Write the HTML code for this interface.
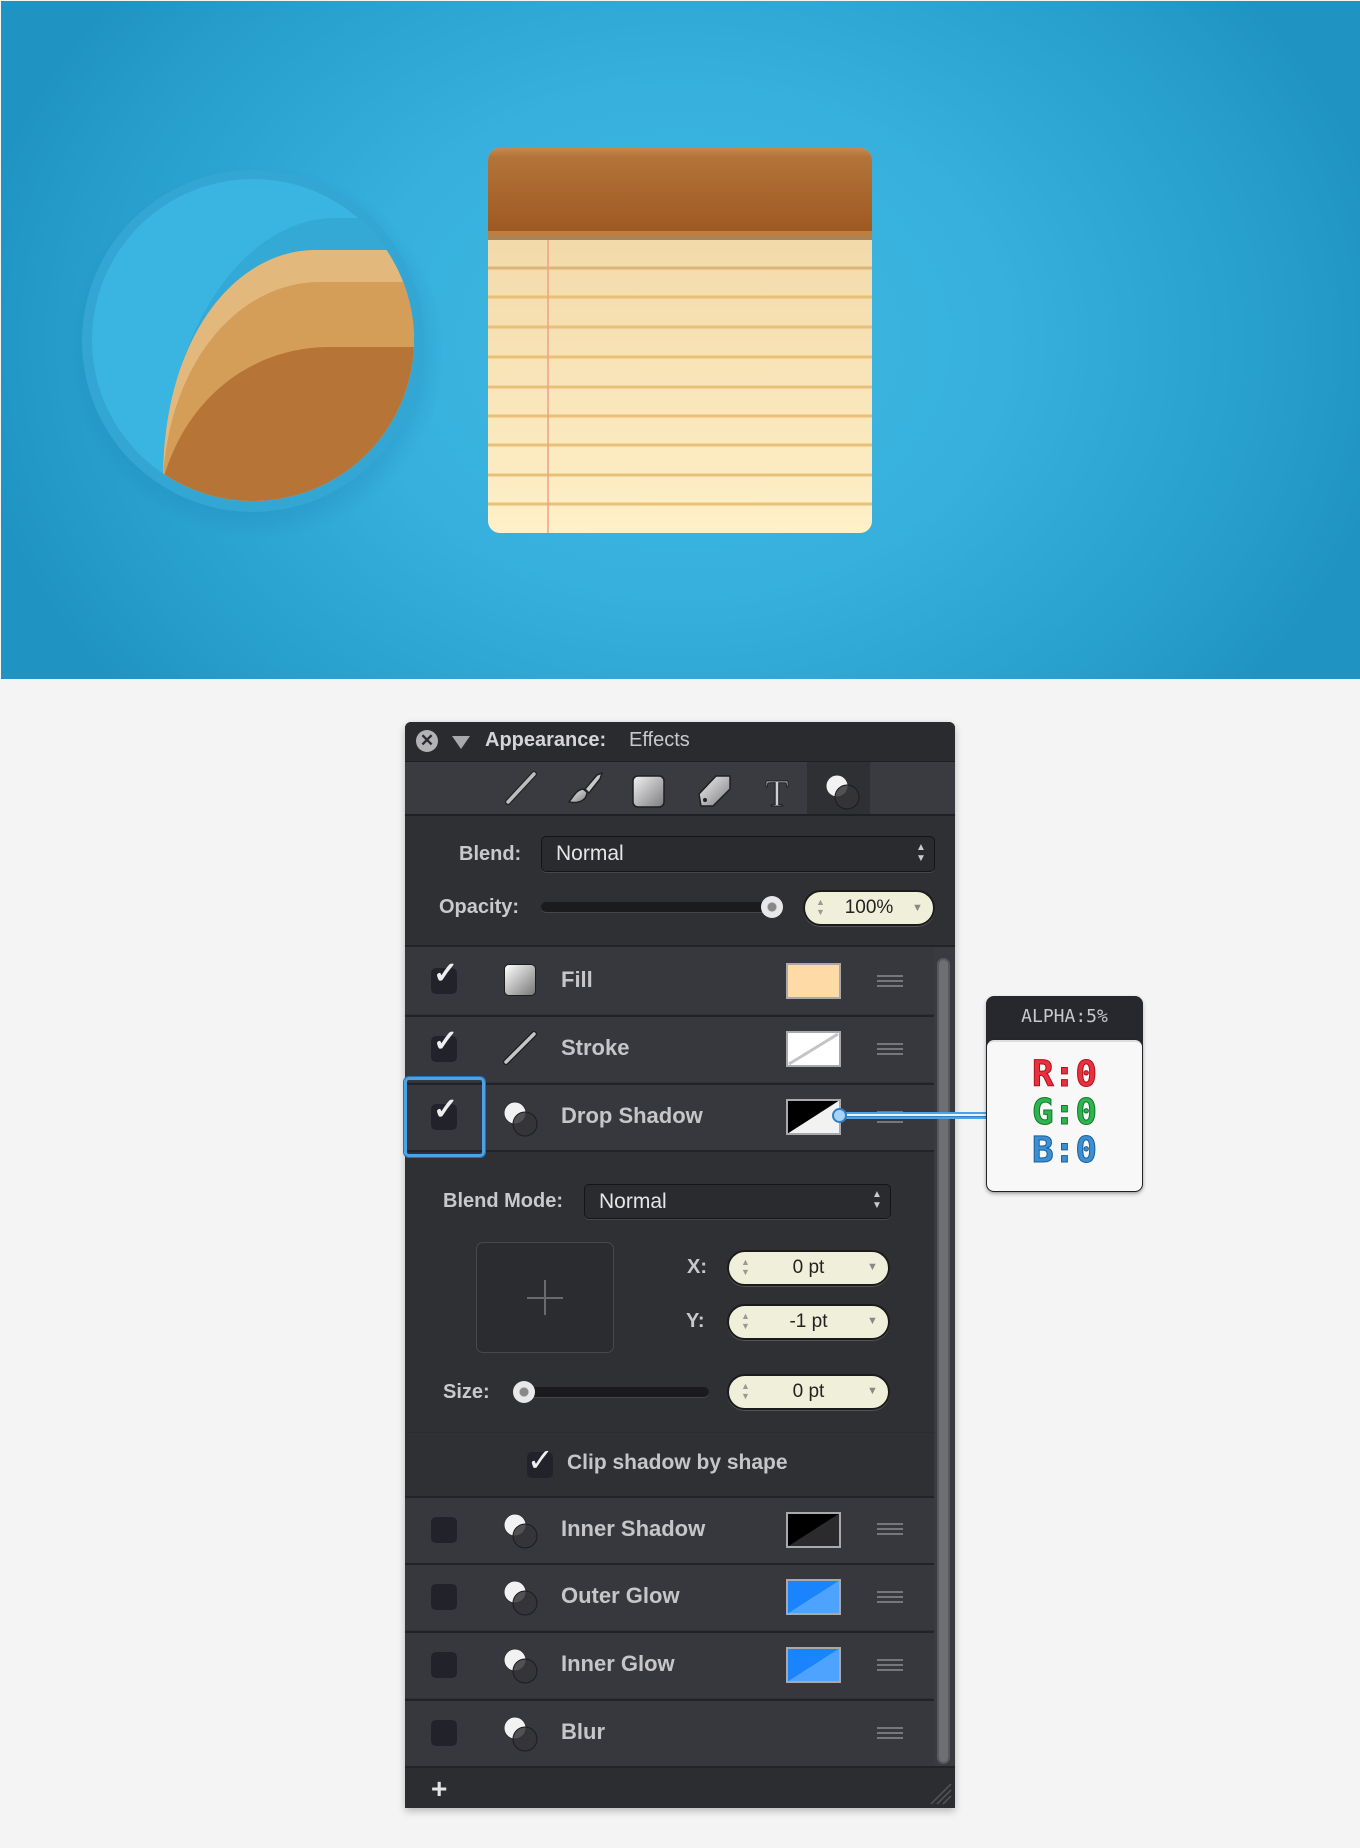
<!DOCTYPE html>
<html><head><meta charset="utf-8"><style>
*{margin:0;padding:0;box-sizing:border-box}
body{width:1360px;height:1848px;background:#f4f4f4;position:relative;overflow:hidden;font-family:"Liberation Sans",sans-serif}
.a{position:absolute}
.hero{left:1px;top:1px;width:1359px;height:678px;background:radial-gradient(ellipse 720px 560px at 680px 340px,#3eb8e2 0%,#37b0dd 45%,#2aa2cf 75%,#1f94c3 100%)}
.lbl{color:#c9c9cc;font-weight:bold;font-size:20px}
.row{left:405px;width:529px;height:67px;background:#37383d;border-top:2px solid #222326}
.cb{width:26px;height:26px;border-radius:5px;background:#22232a}
.name{color:#c6c6c9;font-weight:bold;font-size:22px}
.sw{width:55px;height:36px}
.ham{width:26px;height:12px;border-top:2px solid #77777b;border-bottom:2px solid #77777b}
.ham:after{content:"";position:absolute;left:0;top:3px;width:26px;height:2px;background:#77777b}
.field{height:36px;border-radius:18px;background:#f0f0da;border:2px solid #1b1b1b;box-shadow:0 1px 0 #555;color:#222;font-size:19px;text-align:center;line-height:32px}
.drop{border:1px solid #151517;border-radius:5px;background:#2a2b2f;color:#e6e6e6;font-size:21px;line-height:34px;padding-left:14px;box-shadow:0 1px 0 #46474b}
.ck{color:#eee;font-size:30px;font-weight:bold}
</style></head><body>
<div class="a hero"></div>
<svg class="a" style="left:0;top:0" width="1360" height="680">
<defs>
<clipPath id="ci"><circle cx="253" cy="340" r="161"/></clipPath>
<linearGradient id="hd" x1="0" y1="0" x2="0" y2="1"><stop offset="0" stop-color="#c58a4c"/><stop offset=".1" stop-color="#b37439"/><stop offset="1" stop-color="#9c5720"/></linearGradient>
<linearGradient id="pp" x1="0" y1="0" x2="0" y2="1"><stop offset="0" stop-color="#d7bd8b"/><stop offset=".15" stop-color="#f1d7a6"/><stop offset="1" stop-color="#fff0c8"/></linearGradient>
<radialGradient id="sh"><stop offset=".8" stop-color="#1a7fb0" stop-opacity=".35"/><stop offset="1" stop-color="#1a7fb0" stop-opacity="0"/></radialGradient>
</defs>
<circle cx="256" cy="352" r="188" fill="url(#sh)"/>
<circle cx="253" cy="341" r="171" fill="#33a6d4"/>
<circle cx="253" cy="340" r="161" fill="#3ab4e0"/>
<g clip-path="url(#ci)">
<path d="M163 520 L163 470 C170 320 250 215 340 218 L420 218 L420 520 Z" fill="#34a9d6"/>
<path d="M163 520 L163 475 C165 330 240 250 315 250 L420 250 L420 520 Z" fill="#e3b87c"/>
<path d="M163 520 L163 478 C170 360 240 282 320 282 L420 282 L420 520 Z" fill="#d49d58"/>
<path d="M163 520 L163 480 C185 400 250 347 330 347 L420 347 L420 520 Z" fill="#b67537"/>
</g>
<rect x="488" y="148" width="384" height="385" rx="12" fill="url(#pp)"/>
<path d="M488 236 V160 a12 12 0 0 1 12 -12 H860 a12 12 0 0 1 12 12 V236 Z" fill="url(#hd)"/>
<rect x="488" y="231" width="384" height="5" fill="#c17d3e"/>
<rect x="488" y="236" width="384" height="4" fill="#7a4a1e" opacity=".6"/>
<g stroke="#e9c078" stroke-width="3">
<line x1="488" y1="268" x2="872" y2="268" stroke="#dcb678"/><line x1="488" y1="297" x2="872" y2="297"/><line x1="488" y1="327" x2="872" y2="327"/><line x1="488" y1="357" x2="872" y2="357"/><line x1="488" y1="387" x2="872" y2="387"/><line x1="488" y1="416" x2="872" y2="416"/><line x1="488" y1="445" x2="872" y2="445"/><line x1="488" y1="475" x2="872" y2="475"/><line x1="488" y1="504" x2="872" y2="504"/>
</g>
<line x1="548" y1="240" x2="548" y2="533" stroke="#f0a08a" stroke-width="1.5"/>
</svg>

<!-- panel -->
<div class="a" style="left:405px;top:722px;width:550px;height:1086px;background:#2f3034;border-radius:6px 6px 0 0;box-shadow:0 3px 8px rgba(0,0,0,.25)"></div>
<div class="a" style="left:405px;top:722px;width:550px;height:40px;background:#2a2b2f;border-radius:6px 6px 0 0;border-bottom:1px solid #1e1f22"></div>
<div class="a" style="left:416px;top:730px;width:22px;height:22px;border-radius:50%;background:#b3b3b6;color:#2a2b2f;font-weight:bold;font-size:17px;line-height:22px;text-align:center">✕</div>
<div class="a" style="left:452px;top:736px;width:0;height:0;border-left:9px solid transparent;border-right:9px solid transparent;border-top:13px solid #a9a9ac"></div>
<div class="a" style="left:485px;top:729px;color:#d5d5d8;font-weight:bold;font-size:20px">Appearance:</div>
<div class="a" style="left:629px;top:729px;color:#c9c9cc;font-size:20px">Effects</div>
<div class="a" style="left:405px;top:762px;width:550px;height:54px;background:#3a3b40;border-bottom:2px solid #1f2023"></div>
<div class="a" style="left:807px;top:762px;width:63px;height:52px;background:#2f3034"></div>
<svg class="a" style="left:405px;top:762px" width="550" height="54">
<defs><linearGradient id="ig" x1="0" y1="0" x2="1" y2="1"><stop offset="0" stop-color="#f2f2f2"/><stop offset="1" stop-color="#7c7c80"/></linearGradient></defs>
<line x1="103" y1="40" x2="129" y2="12" stroke="#222" stroke-width="6" stroke-linecap="round"/>
<line x1="103" y1="40" x2="129" y2="12" stroke="#bdbdc0" stroke-width="3.5" stroke-linecap="round"/>
<path d="M164 40 C170 32 172 28 178 27 L182 30 C182 38 174 42 164 40 Z" fill="url(#ig)" stroke="#222" stroke-width="1.5"/>
<path d="M180 27 L192 13 L197 11 L195 17 L184 31 Z" fill="#c8c8cb" stroke="#222" stroke-width="1.5"/>
<rect x="228" y="14" width="31" height="31" rx="5" fill="url(#ig)" stroke="#1f1f22" stroke-width="1.5"/>
<path d="M294 32 L311 14 L325 14 L325 27 L308 44 L296 44 Z" fill="url(#ig)" stroke="#1f1f22" stroke-width="1.5"/>
<circle cx="300" cy="38" r="2" fill="#222"/>
<text x="372" y="44" font-family="Liberation Serif,serif" font-size="38" fill="#cfcfd2" stroke="#1d1d1f" stroke-width="1" text-anchor="middle">T</text>
<circle cx="432" cy="24" r="11" fill="#f2f2f2" stroke="#333" stroke-width="1"/>
<circle cx="442" cy="35" r="12" fill="#353538" fill-opacity=".85" stroke="#1c1c1e" stroke-width="1"/>
</svg>

<div class="a lbl" style="left:459px;top:843px">Blend:</div>
<div class="a drop" style="left:541px;top:836px;width:394px;height:36px">Normal</div>
<div class="a" style="left:916px;top:842px;color:#ccc;font-size:10px;line-height:11px">▲<br>▼</div>
<div class="a lbl" style="left:439px;top:896px">Opacity:</div>
<div class="a" style="left:541px;top:902px;width:235px;height:10px;border-radius:5px;background:#1b1b1d;box-shadow:0 1px 0 #45464a"></div>
<div class="a" style="left:761px;top:896px;width:22px;height:22px;border-radius:50%;background:radial-gradient(circle,#888 0 4px,#e8e8e8 5px)"></div>
<div class="a field" style="left:803px;top:890px;width:132px">100%</div>
<div class="a" style="left:816px;top:897px;color:#999;font-size:9px;line-height:10px">▲<br>▼</div>
<div class="a" style="left:912px;top:902px;color:#888;font-size:11px">▼</div>
<div class="a" style="left:405px;top:945px;width:550px;height:2px;background:#222326"></div>

<!-- scrollbar -->
<div class="a" style="left:934px;top:947px;width:21px;height:819px;background:#3a3b40"></div>
<div class="a" style="left:937px;top:958px;width:13px;height:806px;border-radius:7px;background:#6e6f73;border:2px solid #58595c"></div>

<!-- rows -->
<div class="a row" style="top:947px;border-top:0"></div>
<div class="a row" style="top:1015px"></div>
<div class="a row" style="top:1083px"></div>
<div class="a" style="left:405px;top:1150px;width:529px;height:346px;background:#2f3034;border-top:2px solid #222326"></div>
<div class="a row" style="top:1496px"></div>
<div class="a row" style="top:1563px"></div>
<div class="a row" style="top:1631px"></div>
<div class="a row" style="top:1699px"></div>
<div class="a" style="left:405px;top:1766px;width:550px;height:42px;background:#2c2d31;border-top:2px solid #222326"></div>
<div class="a" style="left:431px;top:1775px;color:#e5e5e5;font-weight:bold;font-size:28px;line-height:28px">+</div>
<svg class="a" style="left:925px;top:1778px" width="28" height="28"><g stroke="#555" stroke-width="1.5"><line x1="26" y1="6" x2="6" y2="26"/><line x1="26" y1="12" x2="12" y2="26"/><line x1="26" y1="18" x2="18" y2="26"/></g></svg>

<!-- checkboxes -->
<div class="a cb" style="left:431px;top:968px"></div><div class="a ck" style="left:433px;top:956px">✓</div>
<div class="a cb" style="left:431px;top:1036px"></div><div class="a ck" style="left:433px;top:1024px">✓</div>
<div class="a cb" style="left:431px;top:1104px"></div><div class="a ck" style="left:433px;top:1092px">✓</div>
<div class="a" style="left:404px;top:1077px;width:81px;height:80px;border:3px solid #4aa3e8;border-radius:5px;box-shadow:0 0 0 1px #2c6fb0"></div>
<div class="a cb" style="left:431px;top:1517px"></div>
<div class="a cb" style="left:431px;top:1584px"></div>
<div class="a cb" style="left:431px;top:1652px"></div>
<div class="a cb" style="left:431px;top:1720px"></div>

<!-- row icons -->
<div class="a" style="left:504px;top:964px;width:32px;height:32px;border-radius:5px;border:1.5px solid #1d1d1f;background:linear-gradient(135deg,#fff,#777)"></div>
<svg class="a" style="left:502px;top:1030px" width="36" height="36"><line x1="4" y1="32" x2="32" y2="4" stroke="#1d1d1f" stroke-width="6" stroke-linecap="round"/><line x1="4" y1="32" x2="32" y2="4" stroke="#c5c5c8" stroke-width="3.5" stroke-linecap="round"/></svg>
<svg class="a" style="left:500px;top:1098px" width="44" height="44"><circle cx="15" cy="15" r="11" fill="#f2f2f2" stroke="#333"/><circle cx="25" cy="26" r="12" fill="#353538" fill-opacity=".85" stroke="#1c1c1e"/></svg>
<svg class="a" style="left:500px;top:1510px" width="44" height="44"><circle cx="15" cy="15" r="11" fill="#f2f2f2" stroke="#333"/><circle cx="25" cy="26" r="12" fill="#353538" fill-opacity=".85" stroke="#1c1c1e"/></svg>
<svg class="a" style="left:500px;top:1577px" width="44" height="44"><circle cx="15" cy="15" r="11" fill="#f2f2f2" stroke="#333"/><circle cx="25" cy="26" r="12" fill="#353538" fill-opacity=".85" stroke="#1c1c1e"/></svg>
<svg class="a" style="left:500px;top:1645px" width="44" height="44"><circle cx="15" cy="15" r="11" fill="#f2f2f2" stroke="#333"/><circle cx="25" cy="26" r="12" fill="#353538" fill-opacity=".85" stroke="#1c1c1e"/></svg>
<svg class="a" style="left:500px;top:1713px" width="44" height="44"><circle cx="15" cy="15" r="11" fill="#f2f2f2" stroke="#333"/><circle cx="25" cy="26" r="12" fill="#353538" fill-opacity=".85" stroke="#1c1c1e"/></svg>

<!-- names -->
<div class="a name" style="left:561px;top:967px">Fill</div>
<div class="a name" style="left:561px;top:1035px">Stroke</div>
<div class="a name" style="left:561px;top:1103px">Drop Shadow</div>
<div class="a name" style="left:561px;top:1516px">Inner Shadow</div>
<div class="a name" style="left:561px;top:1583px">Outer Glow</div>
<div class="a name" style="left:561px;top:1651px">Inner Glow</div>
<div class="a name" style="left:561px;top:1719px">Blur</div>

<!-- swatches -->
<svg class="a sw" style="left:786px;top:963px"><rect x="1" y="1" width="53" height="34" fill="#fedaa6" stroke="#a9a9ab" stroke-width="2"/></svg>
<svg class="a sw" style="left:786px;top:1031px"><rect x="1" y="1" width="53" height="34" fill="#fff" stroke="#a9a9ab" stroke-width="2"/><line x1="3" y1="33" x2="52" y2="3" stroke="#c4c4c4" stroke-width="3"/></svg>
<svg class="a sw" style="left:786px;top:1099px"><rect x="1" y="1" width="53" height="34" fill="#f2f2f2"/><polygon points="1,1 54,1 1,35" fill="#000"/><rect x="1" y="1" width="53" height="34" fill="none" stroke="#a9a9ab" stroke-width="2"/></svg>
<svg class="a sw" style="left:786px;top:1512px"><rect x="1" y="1" width="53" height="34" fill="#2b2b2d"/><polygon points="1,1 54,1 1,35" fill="#000"/><rect x="1" y="1" width="53" height="34" fill="none" stroke="#a9a9ab" stroke-width="2"/></svg>
<svg class="a sw" style="left:786px;top:1579px"><rect x="1" y="1" width="53" height="34" fill="#4da3ff"/><polygon points="1,1 54,1 1,35" fill="#1a84ff"/><rect x="1" y="1" width="53" height="34" fill="none" stroke="#a9a9ab" stroke-width="2"/></svg>
<svg class="a sw" style="left:786px;top:1647px"><rect x="1" y="1" width="53" height="34" fill="#4da3ff"/><polygon points="1,1 54,1 1,35" fill="#1a84ff"/><rect x="1" y="1" width="53" height="34" fill="none" stroke="#a9a9ab" stroke-width="2"/></svg>

<div class="a ham" style="left:877px;top:975px"></div>
<div class="a ham" style="left:877px;top:1043px"></div>
<div class="a ham" style="left:877px;top:1111px"></div>
<div class="a ham" style="left:877px;top:1523px"></div>
<div class="a ham" style="left:877px;top:1591px"></div>
<div class="a ham" style="left:877px;top:1659px"></div>
<div class="a ham" style="left:877px;top:1727px"></div>

<!-- expanded drop shadow settings -->
<div class="a lbl" style="left:443px;top:1190px">Blend Mode:</div>
<div class="a drop" style="left:584px;top:1184px;width:307px;height:35px">Normal</div>
<div class="a" style="left:872px;top:1189px;color:#ccc;font-size:10px;line-height:11px">▲<br>▼</div>
<div class="a" style="left:476px;top:1242px;width:138px;height:111px;border:1.5px solid #47484c;border-radius:7px;background:#2b2c30"></div>
<div class="a" style="left:527px;top:1297px;width:36px;height:1.5px;background:#6a6a6d"></div>
<div class="a" style="left:544px;top:1280px;width:1.5px;height:35px;background:#6a6a6d"></div>
<div class="a lbl" style="left:687px;top:1256px">X:</div>
<div class="a lbl" style="left:686px;top:1310px">Y:</div>
<div class="a lbl" style="left:443px;top:1381px">Size:</div>
<div class="a field" style="left:727px;top:1250px;width:163px">0 pt</div>
<div class="a field" style="left:727px;top:1304px;width:163px">-1 pt</div>
<div class="a field" style="left:727px;top:1374px;width:163px">0 pt</div>
<div class="a" style="left:741px;top:1257px;color:#999;font-size:9px;line-height:10px">▲<br>▼</div>
<div class="a" style="left:741px;top:1311px;color:#999;font-size:9px;line-height:10px">▲<br>▼</div>
<div class="a" style="left:741px;top:1381px;color:#999;font-size:9px;line-height:10px">▲<br>▼</div>
<div class="a" style="left:867px;top:1261px;color:#888;font-size:11px">▼</div>
<div class="a" style="left:867px;top:1315px;color:#888;font-size:11px">▼</div>
<div class="a" style="left:867px;top:1385px;color:#888;font-size:11px">▼</div>
<div class="a" style="left:514px;top:1387px;width:195px;height:10px;border-radius:5px;background:#1b1b1d;box-shadow:0 1px 0 #45464a"></div>
<div class="a" style="left:513px;top:1381px;width:22px;height:22px;border-radius:50%;background:radial-gradient(circle,#888 0 4px,#e8e8e8 5px)"></div>
<div class="a" style="left:405px;top:1432px;width:529px;height:1px;background:#2b2c30"></div>
<div class="a cb" style="left:527px;top:1452px"></div>
<div class="a" style="left:527px;top:1441px;color:#f0f0f0;font-size:32px">✓</div>
<div class="a name" style="left:567px;top:1451px;font-size:21px">Clip shadow by shape</div>

<!-- connector line -->
<div class="a" style="left:840px;top:1112px;width:146px;height:7px;background:#2f7fc4;border-top:2px solid #4aa3e8;border-bottom:2px solid #4aa3e8"></div>
<div class="a" style="left:840px;top:1114px;width:146px;height:2px;background:#e8f2fb"></div>
<div class="a" style="left:832px;top:1108px;width:15px;height:15px;border-radius:50%;background:#a9d3f5;border:2px solid #2f7fc4"></div>

<!-- tooltip -->
<div class="a" style="left:986px;top:996px;width:157px;height:196px;border-radius:8px;background:#27282d;box-shadow:0 2px 4px rgba(0,0,0,.25)"></div>
<div class="a" style="left:986px;top:1006px;width:157px;text-align:center;color:#c8c8cb;font-family:'DejaVu Sans Mono','Liberation Mono',monospace;font-size:18px">ALPHA:5%</div>
<div class="a" style="left:987px;top:1040px;width:155px;height:151px;border-radius:7px;background:#f8f8f8;border-top:2px solid #ddd;box-shadow:0 1px 3px rgba(0,0,0,.3)"></div>
<div class="a" style="left:986px;top:1056px;width:157px;text-align:center;font-family:'DejaVu Sans Mono','Liberation Mono',monospace;font-weight:bold;font-size:36px;line-height:38px">
<div style="color:#e8313e;-webkit-text-stroke:1px #b0101d">R:0</div>
<div style="color:#2fb34f;-webkit-text-stroke:1px #117a2a">G:0</div>
<div style="color:#3b8fd3;-webkit-text-stroke:1px #1c5e98">B:0</div>
</div>
</body></html>
